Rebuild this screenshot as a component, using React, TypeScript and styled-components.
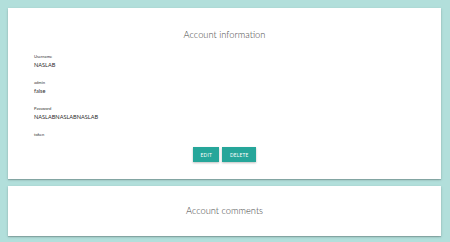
import React from 'react';
import styled, { createGlobalStyle } from 'styled-components';

const GlobalStyle = createGlobalStyle`
  html, body {
    margin: 0;
    padding: 0;
    background: #b2dfdb;
    font-family: Lato, "Open Sans", "Liberation Sans", sans-serif;
  }
`;

const Page = styled.div`
  display: flex;
  flex-direction: column;
  gap: 7px;
  padding: 8px 9px 6px 8px;
`;

const Card = styled.section<{ $height: number }>`
  background: #fff;
  height: ${(p) => p.$height}px;
  box-sizing: border-box;
  box-shadow: 0 1px 1px rgba(0, 0, 0, 0.14), 0 1px 2px -1px rgba(0, 0, 0, 0.2),
    0 1px 3px rgba(0, 0, 0, 0.12);
  display: flex;
  flex-direction: column;
`;

const InfoCard = styled(Card)`
  padding: 20px 26px 0;
`;

const CommentsCard = styled(Card)`
  justify-content: center;
  align-items: center;
`;

const Title = styled.h2`
  margin: 0;
  font-size: 9.3px;
  line-height: 14px;
  font-weight: 300;
  color: #444;
  text-align: center;
`;

const Fields = styled.div`
  display: flex;
  flex-direction: column;
  gap: 9px;
  margin-top: 11px;
`;

const Field = styled.div`
  display: flex;
  flex-direction: column;
`;

const Label = styled.span`
  font-size: 4.1px;
  line-height: 7px;
  color: #333;
`;

const Value = styled.span<{ $empty?: boolean }>`
  font-size: 5.6px;
  line-height: 10px;
  min-height: ${(p) => (p.$empty ? 0 : 10)}px;
  color: #2b2b2b;
`;

const Actions = styled.div`
  display: flex;
  justify-content: center;
  gap: 3px;
  margin-top: 9px;
`;

const Button = styled.button`
  height: 15px;
  padding: 0 7.5px;
  border: none;
  background: #26a69a;
  color: #fff;
  font-family: Lato, "Open Sans", "Liberation Sans", sans-serif;
  font-size: 4.8px;
  letter-spacing: 0.2px;
  text-transform: uppercase;
  box-shadow: 0 1px 2px rgba(0, 0, 0, 0.25);
  cursor: pointer;
`;

const fields = [
  { label: 'Username', value: 'NASLAB' },
  { label: 'admin', value: 'false' },
  { label: 'Password', value: 'NASLABNASLABNASLAB' },
  { label: 'token', value: '' },
];

export default function App() {
  return (
    <>
      <GlobalStyle />
      <Page>
        <InfoCard $height={171}>
          <Title>Account information</Title>
          <Fields>
            {fields.map((f) => (
              <Field key={f.label}>
                <Label>{f.label}</Label>
                <Value $empty={!f.value}>{f.value}</Value>
              </Field>
            ))}
          </Fields>
          <Actions>
            <Button>Edit</Button>
            <Button>Delete</Button>
          </Actions>
        </InfoCard>
        <CommentsCard $height={50}>
          <Title>Account comments</Title>
        </CommentsCard>
      </Page>
    </>
  );
}
